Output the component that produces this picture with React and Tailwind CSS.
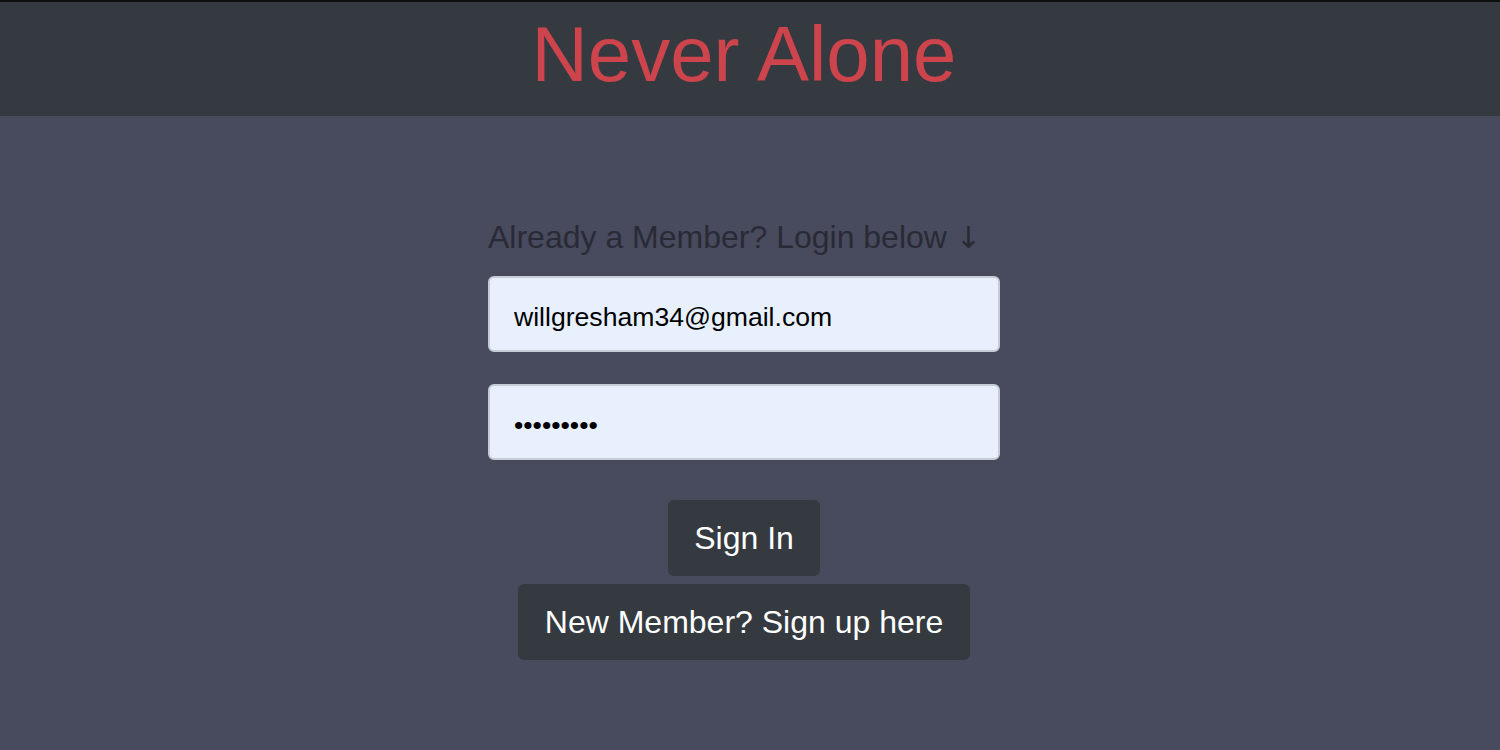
import React, { useState } from 'react'

function App() {
  const [email, setEmail] = useState('willgresham34@gmail.com')
  const [senha, setSenha] = useState('123456789')

  return (
    <div className="min-h-screen bg-[#484a5d] font-['Liberation_Sans',Arial,sans-serif]">
      <header className="h-[116px] bg-[#343a40] border-t-2 border-[#0d0e10] flex items-center justify-center pb-[10px] pr-3">
        <h1 className="text-[78px] leading-none text-[#cd444c]">Never Alone</h1>
      </header>

      <main className="flex justify-center pr-3 pt-[102px]">
        <div className="w-[512px] flex flex-col">
          <h5 className="text-[32px] leading-[1.2] text-[#282b36] mb-[20px]">
            Already a Member? Login below <span className="font-['DejaVu_Sans',sans-serif] text-[30px]">↓</span>
          </h5>

          <input
            type="email"
            className="h-[76px] w-full bg-[#e8f0fe] border-2 border-[#c6ccd6] rounded-[6px] px-6 pt-[6px] text-[26.6px] text-black outline-none"
            value={email}
            onChange={(e) => setEmail(e.target.value)}
          />

          <input
            type="password"
            className="h-[76px] w-full mt-8 bg-[#e8f0fe] border-2 border-[#c6ccd6] rounded-[6px] px-6 pt-[6px] text-[26.6px] text-black outline-none"
            value={senha}
            onChange={(e) => setSenha(e.target.value)}
          />

          <div className="flex flex-col items-center mt-10 gap-2">
            <button className="w-[152px] h-[76px] bg-[#343a40] text-white text-[32px] rounded-[6px]">
              Sign In
            </button>
            <button className="w-[452px] h-[76px] bg-[#343a40] text-white text-[32px] rounded-[6px]">
              New Member? Sign up here
            </button>
          </div>
        </div>
      </main>
    </div>
  )
}

export default App
